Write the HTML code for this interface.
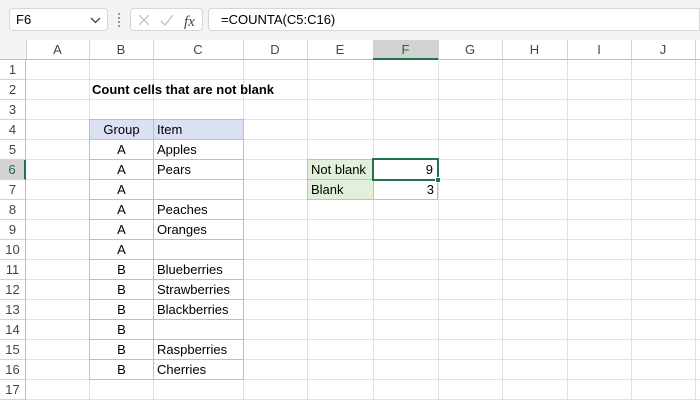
<!DOCTYPE html><html><head><style>
body{margin:0;width:700px;height:400px;overflow:hidden;background:#fff;font-family:"Liberation Sans",sans-serif;position:relative;font-size:13px}
div{position:absolute;box-sizing:border-box}
.top{left:0;top:0;width:700px;height:40px;background:#f3f3f3}
.nb{left:9px;top:8px;width:99px;height:23px;background:#fff;border:1px solid #d6d6d6;border-radius:4px;line-height:21px;padding-left:6px}
.fx{left:130px;top:8px;width:73px;height:23px;background:#fff;border:1px solid #d6d6d6;border-radius:4px}
.fb{left:208px;top:8px;width:492px;height:23px;background:#fff;border:1px solid #d6d6d6;border-radius:4px 0 0 4px;line-height:21px;padding-left:12px}
.grid{left:26px;top:60px;width:674px;height:340px;background:repeating-linear-gradient(to bottom,transparent 0,transparent 19px,#e1e1e1 19px,#e1e1e1 20px)}
.v{top:40px;width:1px;height:360px;background:#e1e1e1}
.ch{top:40px;height:20px;line-height:20px;text-align:center;color:#444;border-bottom:1px solid #bdbdbd;border-right:1px solid #d4d4d4}
.rh{left:0;width:26px;height:20px;line-height:20px;text-align:center;color:#444;border-right:1px solid #bdbdbd;border-bottom:1px solid #d4d4d4;background:#fff}
.c{height:21px;line-height:20px;border:1px solid #bfbfbf;padding:0 3px;white-space:nowrap}
</style></head><body>
<div class="top"></div>
<div class="nb">F6<svg style="position:absolute;right:6px;top:8px" width="11" height="7"><path d="M1 1L5.5 5.5L10 1" stroke="#444" fill="none" stroke-width="1.3"/></svg></div>
<div style="left:118px;top:13px;width:2px;height:14px;border-left:2px dotted #999"></div>
<div class="fx"><svg width="73" height="23"><path d="M8 6L18 16M18 6L8 16" stroke="#bbb" stroke-width="1.2" fill="none"/><path d="M30 12L34 16L42 6" stroke="#bbb" stroke-width="1.2" fill="none"/><text x="53" y="17" font-family="Liberation Serif" font-style="italic" font-size="15" fill="#444">fx</text></svg></div>
<div class="fb">=COUNTA(C5:C16)</div>
<div class="grid"></div>
<div class="v" style="left:89px"></div><div class="v" style="left:153px"></div><div class="v" style="left:243px"></div><div class="v" style="left:307px"></div><div class="v" style="left:373px"></div><div class="v" style="left:438px"></div><div class="v" style="left:502px"></div><div class="v" style="left:567px"></div><div class="v" style="left:631px"></div><div class="v" style="left:695px"></div>
<div class="ch" style="left:0;width:27px;background:#f3f3f3"></div>
<div class="ch" style="left:26px;width:64px">A</div>
<div class="ch" style="left:89px;width:65px">B</div>
<div class="ch" style="left:153px;width:91px">C</div>
<div class="ch" style="left:243px;width:65px">D</div>
<div class="ch" style="left:307px;width:67px">E</div>
<div class="ch" style="left:373px;width:66px;background:#d2d2d2;color:#1e6a3e;border-bottom:2px solid #217346">F</div>
<div class="ch" style="left:438px;width:65px">G</div>
<div class="ch" style="left:502px;width:66px">H</div>
<div class="ch" style="left:567px;width:65px">I</div>
<div class="ch" style="left:631px;width:65px">J</div>
<div class="ch" style="left:695px;width:5px;border-right:none"></div>
<div class="rh" style="top:60px">1</div><div class="rh" style="top:80px">2</div><div class="rh" style="top:100px">3</div><div class="rh" style="top:120px">4</div><div class="rh" style="top:140px">5</div>
<div class="rh" style="top:160px;background:#d2d2d2;color:#1e6a3e;border-right:2px solid #217346">6</div>
<div class="rh" style="top:180px">7</div><div class="rh" style="top:200px">8</div><div class="rh" style="top:220px">9</div><div class="rh" style="top:240px">10</div><div class="rh" style="top:260px">11</div><div class="rh" style="top:280px">12</div><div class="rh" style="top:300px">13</div><div class="rh" style="top:320px">14</div><div class="rh" style="top:340px">15</div><div class="rh" style="top:360px">16</div><div class="rh" style="top:380px">17</div>
<div style="left:92px;top:80px;height:20px;line-height:20px;font-weight:bold;white-space:nowrap">Count cells that are not blank</div>
<div class="c" style="left:89px;top:119px;width:65px;background:#d9e1f2;text-align:center">Group</div>
<div class="c" style="left:153px;top:119px;width:91px;background:#d9e1f2">Item</div>
<div class="c" style="left:89px;top:139px;width:65px;text-align:center">A</div><div class="c" style="left:153px;top:139px;width:91px">Apples</div>
<div class="c" style="left:89px;top:159px;width:65px;text-align:center">A</div><div class="c" style="left:153px;top:159px;width:91px">Pears</div>
<div class="c" style="left:89px;top:179px;width:65px;text-align:center">A</div><div class="c" style="left:153px;top:179px;width:91px"></div>
<div class="c" style="left:89px;top:199px;width:65px;text-align:center">A</div><div class="c" style="left:153px;top:199px;width:91px">Peaches</div>
<div class="c" style="left:89px;top:219px;width:65px;text-align:center">A</div><div class="c" style="left:153px;top:219px;width:91px">Oranges</div>
<div class="c" style="left:89px;top:239px;width:65px;text-align:center">A</div><div class="c" style="left:153px;top:239px;width:91px"></div>
<div class="c" style="left:89px;top:259px;width:65px;text-align:center">B</div><div class="c" style="left:153px;top:259px;width:91px">Blueberries</div>
<div class="c" style="left:89px;top:279px;width:65px;text-align:center">B</div><div class="c" style="left:153px;top:279px;width:91px">Strawberries</div>
<div class="c" style="left:89px;top:299px;width:65px;text-align:center">B</div><div class="c" style="left:153px;top:299px;width:91px">Blackberries</div>
<div class="c" style="left:89px;top:319px;width:65px;text-align:center">B</div><div class="c" style="left:153px;top:319px;width:91px"></div>
<div class="c" style="left:89px;top:339px;width:65px;text-align:center">B</div><div class="c" style="left:153px;top:339px;width:91px">Raspberries</div>
<div class="c" style="left:89px;top:359px;width:65px;text-align:center">B</div><div class="c" style="left:153px;top:359px;width:91px">Cherries</div>
<div class="c" style="left:307px;top:159px;width:67px;background:#e2efda">Not blank</div>
<div class="c" style="left:307px;top:179px;width:67px;background:#e2efda">Blank</div>
<div class="c" style="left:373px;top:179px;width:65px;text-align:right">3</div>
<div class="c" style="left:372px;top:158px;width:67px;height:23px;border:2px solid #217346;text-align:right;padding-right:4px;line-height:19px;background:#fff">9</div>
<div style="left:435px;top:177px;width:6px;height:6px;background:#217346;border:1px solid #fff"></div>
</body></html>
